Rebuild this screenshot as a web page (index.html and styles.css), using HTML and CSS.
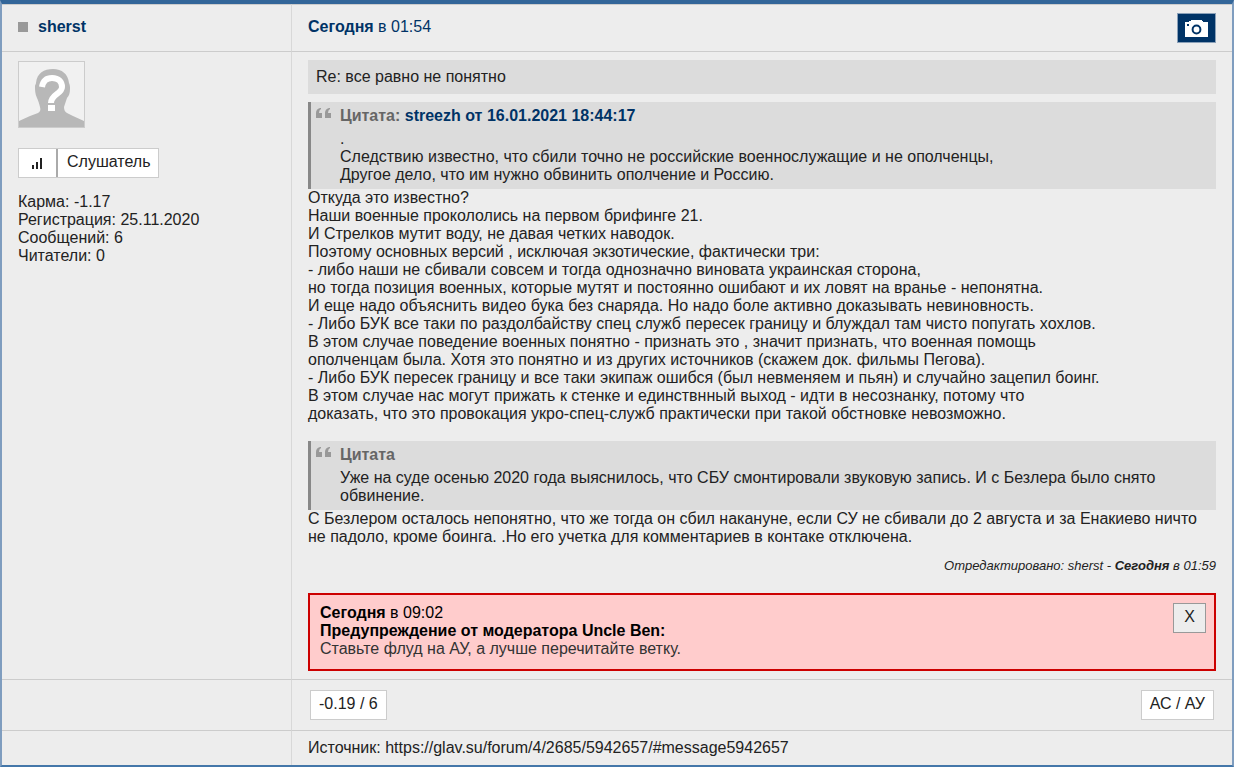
FILE: index.html
```html
<!DOCTYPE html>
<html lang="ru">
<head>
<meta charset="utf-8">
<meta name="viewport" content="width=device-width, initial-scale=1">
<title>Re: все равно не понятно</title>
<link rel="stylesheet" href="styles.css">
</head>
<body>
<article class="post">
  <header class="cell cell-side author">
    <span class="status"></span>
    <a class="link author-name" href="#">sherst</a>
  </header>
  <div class="cell post-head">
    <a class="link" href="#"><b>Сегодня</b> в 01:54</a>
    <button class="camera" type="button" aria-label="Снимок сообщения">
      <svg width="23" height="17" viewBox="0 0 23 17"><path fill="#fff" d="M0 2h4V1h2V0h11v1h1v1h5v15H0z"/><path fill="#003366" d="M2 4h2v2H2z"/><circle cx="11.5" cy="9.5" r="3.9" fill="#fff" stroke="#003366" stroke-width="2"/></svg>
    </button>
  </div>

  <aside class="cell cell-side profile">
    <svg class="avatar" viewBox="0 0 65 65" role="img" aria-label="Аватар">
      <path fill="#b8b8b8" d="M0 65v-6l11-5 8-3c2-1 3-3 2-6-1-4-2-7-3-9-2-4-2-8-2-12 0-1 1-2 1-3C18 11 25 7 34 7c9 0 15 5 16 14 1 2 1 4 1 6 0 4-1 7-3 9-1 3-2 6-3 9 0 3 1 5 3 6l6 3 11 5v6z"/>
      <path fill="none" stroke="#fff" stroke-width="6" d="M23 25c1-6 4-9 10-9 7 0 10 4 10 9 0 7-11 7-11 16"/>
      <path fill="#fff" d="M29 43h7v6h-7z"/>
    </svg>
    <div class="rank">
      <span class="rank-icon"><svg width="12" height="13" viewBox="0 0 12 13"><path fill="#222" d="M1 8h2v4H1zM5 5h2v7H5zM9 1h2v11H9z"/></svg></span>
      <span class="rank-name">Слушатель</span>
    </div>
    <div>Карма: -1.17<br>Регистрация: 25.11.2020<br>Сообщений: 6<br>Читатели: 0</div>
  </aside>
  <div class="cell content">
    <div class="subject">Re: все равно не понятно</div>
    <blockquote class="quote">
      <svg class="quote-mark" viewBox="0 0 16 12"><path fill="#999" d="M4 1h1v1q-2 1-2 4h3v5H0V6q0-4 4-5zM13 1h1v1q-2 1-2 4h3v5H9V6q0-4 4-5z"/></svg>
      <div>
        <div class="quote-title">Цитата: <a class="link" href="#">streezh от 16.01.2021 18:44:17</a></div>
        .<br>Следствию известно, что сбили точно не российские военнослужащие и не ополченцы,<br>Другое дело, что им нужно обвинить ополчение и Россию.
      </div>
    </blockquote>
    <p class="text">Откуда это известно?<br>
Наши военные прокололись на первом брифинге 21.<br>
И Стрелков мутит воду, не давая четких наводок.<br>
Поэтому основных версий , исключая экзотические, фактически три:<br>
- либо наши не сбивали совсем и тогда однозначно виновата украинская сторона,<br>
но тогда позиция военных, которые мутят и постоянно ошибают и их ловят на вранье - непонятна.<br>
И еще надо объяснить видео бука без снаряда. Но надо боле активно доказывать невиновность.<br>
- Либо БУК все таки по раздолбайству спец служб пересек границу и блуждал там чисто попугать хохлов.<br>
В этом случае поведение военных понятно - признать это , значит признать, что военная помощь<br>
ополченцам была. Хотя это понятно и из других источников (скажем док. фильмы Пегова).<br>
- Либо БУК пересек границу и все таки экипаж ошибся (был невменяем и пьян) и случайно зацепил боинг.<br>
В этом случае нас могут прижать к стенке и единствнный выход - идти в несознанку, потому что<br>
доказать, что это провокация укро-спец-служб практически при такой обстновке невозможно.</p>
    <blockquote class="quote quote-spaced">
      <svg class="quote-mark" viewBox="0 0 16 12"><path fill="#999" d="M4 1h1v1q-2 1-2 4h3v5H0V6q0-4 4-5zM13 1h1v1q-2 1-2 4h3v5H9V6q0-4 4-5z"/></svg>
      <div>
        <div class="quote-title">Цитата</div>
        Уже на суде осенью 2020 года выяснилось, что СБУ смонтировали звуковую запись. И с Безлера было снято<br>обвинение.
      </div>
    </blockquote>
    <p class="text">С Безлером осталось непонятно, что же тогда он сбил накануне, если СУ не сбивали до 2 августа и за Енакиево ничто<br>не падоло, кроме боинга. .Но его учетка для комментариев в контаке отключена.</p>
    <p class="edited">Отредактировано: sherst - <b>Сегодня</b> в 01:59</p>
    <section class="warning">
      <div><b>Сегодня</b> в 09:02<br><b>Предупреждение от модератора Uncle Ben:</b><br><span class="warning-text">Ставьте флуд на АУ, а лучше перечитайте ветку.</span></div>
      <button class="box close" type="button">X</button>
    </section>
  </div>

  <div class="cell cell-side"></div>
  <footer class="cell actions">
    <button class="box" type="button">-0.19 / 6</button>
    <button class="box" type="button">АС / АУ</button>
  </footer>

  <div class="cell cell-side"></div>
  <div class="cell source">Источник: https://glav.su/forum/4/2685/5942657/#message5942657</div>
</article>
</body>
</html>
```
FILE: styles.css
```css
* {
  box-sizing: border-box;
}

body {
  margin: 0;
  background: #ededed;
  color: #222;
  font: 16px/18px "Liberation Sans", Arial, sans-serif;
}

.post {
  display: grid;
  grid-template-columns: 290px 1fr;
  border: 2px solid #7f9dbf;
  border-top: 4px solid #336699;
  border-bottom-color: #4477a9;
}

.cell {
  padding: 8px 16px;
  border-top: 1px solid #ccc;
}

.cell-side {
  border-right: 1px solid #d8d8d8;
}

.link {
  color: #003366;
  text-decoration: none;
}

.author,
.post-head {
  display: flex;
  align-items: center;
}

.author {
  gap: 10px;
  padding-bottom: 10px;
}

.author-name {
  font-weight: bold;
}

.status {
  width: 10px;
  height: 10px;
  background: #999;
}

.post-head {
  justify-content: space-between;
}

.post-head .link {
  padding-bottom: 2px;
}

.camera {
  display: flex;
  align-items: center;
  justify-content: center;
  width: 39px;
  height: 30px;
  padding: 0;
  border: 1px solid #8aa0b8;
  background: #003366;
}

.profile {
  display: flex;
  flex-direction: column;
  align-items: flex-start;
}

.avatar {
  width: 67px;
  height: 67px;
  margin: 1px 0 20px;
  border: 1px solid #ccc;
  background: #f1f1f1;
}

.rank {
  display: flex;
  height: 30px;
  margin-bottom: 15px;
  border: 1px solid #ccc;
  background: #fff;
}

.rank-icon {
  display: flex;
  align-items: center;
  padding: 0 13px 0 12px;
  border-right: 2px solid #aaa;
}

.rank-name {
  padding: 4px 8px 4px 9px;
}

.subject {
  margin-bottom: 8px;
  padding: 8px;
  background: #dcdcdc;
}

.quote {
  display: flex;
  align-items: flex-start;
  gap: 8px;
  margin: 0;
  padding: 5px 8px 5px 5px;
  border-left: 3px solid #888;
  background: #dcdcdc;
}

.quote-spaced {
  margin-top: 18px;
}

.quote-mark {
  flex: none;
  width: 16px;
  height: 12px;
}

.quote-title {
  margin-bottom: 5px;
  color: #666;
  font-weight: bold;
}

.text {
  margin: 0;
}

.edited {
  margin: 11px 0 18px;
  font-size: 13px;
  font-style: italic;
  text-align: right;
}

.warning {
  display: flex;
  align-items: flex-start;
  justify-content: space-between;
  padding: 8px 8px 11px 10px;
  border: 2px solid #cc0000;
  background: #ffcccc;
  color: #000;
}

.warning > div {
  padding-top: 1px;
}

.warning-text {
  color: #333;
}

.box {
  height: 30px;
  padding: 0 8px 2px;
  border: 1px solid #ccc;
  background: #fff;
  color: #222;
  font: inherit;
}

.close {
  width: 33px;
  padding: 0 0 2px;
  border-color: #999;
  background: #ededed;
}

.actions {
  display: flex;
  justify-content: space-between;
  padding: 10px 18px;
}
```
